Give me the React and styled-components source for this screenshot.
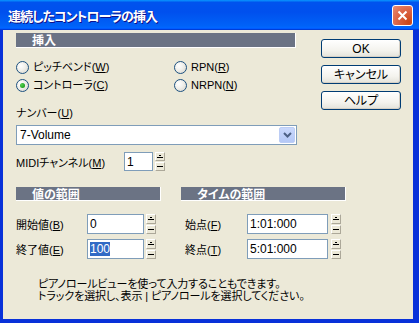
import styled, { createGlobalStyle } from "styled-components";

const GlobalStyle = createGlobalStyle`
  html, body {
    margin: 0;
    padding: 0;
    background: #ffffff;
  }
  body {
    font-family: "Liberation Sans", "Noto Sans CJK JP", sans-serif;
    font-size: 12px;
    color: #000000;
    font-feature-settings: "palt";
  }
`;

const Window = styled.div`
  width: 419px;
  height: 323px;
  display: flex;
  flex-direction: column;
  overflow: hidden;
`;

const TitleBar = styled.div`
  height: 30px;
  flex-shrink: 0;
  display: flex;
  align-items: center;
  justify-content: space-between;
  padding: 0 6px 0 8px;
  box-sizing: border-box;
  background: linear-gradient(
    to bottom,
    #0997ff 0%,
    #0053ee 8%,
    #0050ee 40%,
    #0062f7 85%,
    #0066ff 92%,
    #005bff 95%,
    #003dd7 97%,
    #003dd7 100%
  );
`;

const Title = styled.div`
  color: #ffffff;
  font-family: "Noto Sans CJK JP", sans-serif;
  font-weight: bold;
  font-size: 13px;
  letter-spacing: -1px;
  text-shadow: 1px 1px #0f1089;
  padding-top: 1px;
`;

const CloseButton = styled.div`
  width: 21px;
  height: 21px;
  box-sizing: border-box;
  border: 1px solid #ffffff;
  border-radius: 3px;
  background: radial-gradient(circle at 85% 85%, #cc4616 0%, #dc6547 55%, #e88d74 100%);
  display: flex;
  align-items: center;
  justify-content: center;
  margin-top: 1px;
`;

const Frame = styled.div`
  flex: 1;
  display: flex;
  flex-direction: column;
  background: #ece9d8;
  border-left: 3px solid #0831d9;
  border-right: 6px solid #0831d9;
  border-bottom: 4px solid #0831d9;
  padding: 3px 0 0 13px;
`;

const TopRow = styled.div`
  display: flex;
`;

const LeftCol = styled.div`
  width: 281px;
  display: flex;
  flex-direction: column;
`;

const ButtonCol = styled.div`
  margin-left: 24px;
  padding-top: 6px;
  display: flex;
  flex-direction: column;
  gap: 7px;
`;

const PushButton = styled.div`
  width: 80px;
  height: 19px;
  box-sizing: border-box;
  border: 1px solid #003c74;
  border-radius: 3px;
  background: linear-gradient(to bottom, #ffffff 0%, #f4f3ee 60%, #e3e2da 100%);
  box-shadow: inset -1px -1px 0 #d6d0c5;
  display: flex;
  align-items: center;
  justify-content: center;
  font-size: 12px;
  line-height: 12px;
`;

const SectionHeader = styled.div`
  width: ${(p) => p.$width}px;
  height: ${(p) => p.$height || 13}px;
  background: #6b7384;
  border-right: 1px solid #ffffff;
  border-bottom: 1px solid #ffffff;
  color: #ffffff;
  font-family: "Noto Sans CJK JP", sans-serif;
  font-weight: bold;
  font-size: 12px;
  line-height: ${(p) => p.$height || 13}px;
  padding-left: 16px;
  box-sizing: content-box;
`;

const RadioGrid = styled.div`
  margin-top: 10px;
  display: grid;
  grid-template-columns: 158px 1fr;
  grid-auto-rows: 18px;
`;

const RadioItem = styled.div`
  display: flex;
  align-items: center;
  gap: 4px;
  font-size: 11px;
  line-height: 13px;
`;

const RadioCircle = styled.span`
  width: 13px;
  height: 13px;
  box-sizing: border-box;
  border-radius: 50%;
  border: 1px solid #1c5180;
  background: radial-gradient(circle at 35% 35%, #ffffff 0%, #f0efea 45%, #d3d1c7 100%);
  display: flex;
  align-items: center;
  justify-content: center;
  flex-shrink: 0;

  &::after {
    content: "";
    width: 5px;
    height: 5px;
    border-radius: 50%;
    background: ${(p) => (p.$checked ? "radial-gradient(circle at 35% 35%, #55d051, #21a121 70%)" : "transparent")};
  }
`;

const FieldLabel = styled.div`
  margin-top: 12px;
  height: 14px;
  font-size: 11px;
  line-height: 14px;
`;

const Combo = styled.div`
  margin-top: 5px;
  width: 281px;
  height: 20px;
  box-sizing: border-box;
  border: 1px solid #7f9db9;
  background: #ffffff;
  display: flex;
  align-items: center;
  justify-content: space-between;
  padding: 0 1px 0 3px;
`;

const ComboArrow = styled.div`
  width: 16px;
  height: 16px;
  border-radius: 2px;
  background: linear-gradient(to bottom, #c9d8fc, #b4c8f6);
  border: 1px solid #bccdf5;
  box-sizing: border-box;
  display: flex;
  align-items: center;
  justify-content: center;
`;

const FieldRow = styled.div`
  display: flex;
  align-items: center;
  margin-top: ${(p) => p.$top || 0}px;
  padding-left: ${(p) => p.$indent || 0}px;
`;

const RowLabel = styled.div`
  width: ${(p) => p.$width}px;
  flex-shrink: 0;
  font-size: 11px;
`;

const EditBox = styled.div`
  width: ${(p) => p.$width}px;
  height: ${(p) => p.$height || 20}px;
  box-sizing: border-box;
  border: 1px solid #7f9db9;
  background: #ffffff;
  display: flex;
  align-items: center;
  padding-left: 2px;
  font-size: 12px;
`;

const Selected = styled.span`
  background: #316ac5;
  color: #ffffff;
  line-height: 14px;
`;

const Spinner = styled.div`
  margin-left: ${(p) => p.$gap || 2}px;
  width: 10px;
  height: ${(p) => p.$height || 20}px;
  display: flex;
  flex-direction: column;
  gap: 1px;
`;

const SpinHalf = styled.div`
  flex: 1;
  box-sizing: border-box;
  border: 1px solid #ffffff;
  border-right-color: #aca899;
  border-bottom-color: #aca899;
  background: #ece9d8;
  display: flex;
  align-items: center;
  justify-content: center;
`;

const LowerGrid = styled.div`
  margin-top: 16px;
  display: grid;
  grid-template-columns: 165px 166px;
`;

const LowerCol = styled.div`
  display: flex;
  flex-direction: column;
`;

const Note = styled.div`
  margin-top: 19px;
  padding-left: 22px;
  font-size: 11px;
  line-height: 12px;
  letter-spacing: -0.1px;
`;

function Mn({ children, k }) {
  return (
    <>
      {children}(<u>{k}</u>)
    </>
  );
}

function SpinBox({ height, gap }) {
  return (
    <Spinner $height={height} $gap={gap}>
      <SpinHalf>
        <svg width="6" height="4" viewBox="0 0 6 4">
          <rect x="2" y="0" width="2" height="1" fill="#000" />
          <rect x="0" y="2" width="6" height="1" fill="#000" />
        </svg>
      </SpinHalf>
      <SpinHalf>
        <svg width="6" height="3" viewBox="0 0 6 3">
          <rect x="0" y="1" width="6" height="1" fill="#000" />
        </svg>
      </SpinHalf>
    </Spinner>
  );
}

export default function App() {
  return (
    <>
      <GlobalStyle />
      <Window>
        <TitleBar>
          <Title>連続したコントローラの挿入</Title>
          <CloseButton>
            <svg width="11" height="11" viewBox="0 0 11 11">
              <path d="M1.5 1.5 L9.5 9.5 M9.5 1.5 L1.5 9.5" stroke="#fff" strokeWidth="2" />
            </svg>
          </CloseButton>
        </TitleBar>
        <Frame>
          <TopRow>
            <LeftCol>
              <SectionHeader $width={263} $height={14}>挿入</SectionHeader>
              <RadioGrid>
                <RadioItem>
                  <RadioCircle />
                  <span><Mn k="W">ピッチベンド</Mn></span>
                </RadioItem>
                <RadioItem>
                  <RadioCircle />
                  <span><Mn k="R">RPN</Mn></span>
                </RadioItem>
                <RadioItem>
                  <RadioCircle $checked />
                  <span><Mn k="C">コントローラ</Mn></span>
                </RadioItem>
                <RadioItem>
                  <RadioCircle />
                  <span><Mn k="N">NRPN</Mn></span>
                </RadioItem>
              </RadioGrid>
              <FieldLabel><Mn k="U">ナンバー</Mn></FieldLabel>
              <Combo>
                <span>7-Volume</span>
                <ComboArrow>
                  <svg width="9" height="6" viewBox="0 0 9 6">
                    <path d="M1 1 L4.5 4.5 L8 1" stroke="#4d6185" strokeWidth="2" fill="none" />
                  </svg>
                </ComboArrow>
              </Combo>
              <FieldRow $top={7}>
                <RowLabel $width={108}><Mn k="M">MIDIチャンネル</Mn></RowLabel>
                <EditBox $width={29} $height={19}>1</EditBox>
                <SpinBox height={19} />
              </FieldRow>
            </LeftCol>
            <ButtonCol>
              <PushButton>OK</PushButton>
              <PushButton>キャンセル</PushButton>
              <PushButton>ヘルプ</PushButton>
            </ButtonCol>
          </TopRow>
          <LowerGrid>
            <LowerCol>
              <SectionHeader $width={128}>値の範囲</SectionHeader>
              <FieldRow $top={13}>
                <RowLabel $width={71}><Mn k="B">開始値</Mn></RowLabel>
                <EditBox $width={57}>0</EditBox>
                <SpinBox />
              </FieldRow>
              <FieldRow $top={5}>
                <RowLabel $width={71}><Mn k="E">終了値</Mn></RowLabel>
                <EditBox $width={57}><Selected>100</Selected></EditBox>
                <SpinBox />
              </FieldRow>
            </LowerCol>
            <LowerCol>
              <SectionHeader $width={148}>タイムの範囲</SectionHeader>
              <FieldRow $top={13} $indent={4}>
                <RowLabel $width={62}><Mn k="F">始点</Mn></RowLabel>
                <EditBox $width={81}>1:01:000</EditBox>
                <SpinBox gap={3} />
              </FieldRow>
              <FieldRow $top={5} $indent={4}>
                <RowLabel $width={62}><Mn k="T">終点</Mn></RowLabel>
                <EditBox $width={81}>5:01:000</EditBox>
                <SpinBox gap={3} />
              </FieldRow>
            </LowerCol>
          </LowerGrid>
          <Note>
            ピアノロールビューを使って入力することもできます。
            <br />
            トラックを選択し、表示 | ピアノロールを選択してください。
          </Note>
        </Frame>
      </Window>
    </>
  );
}
